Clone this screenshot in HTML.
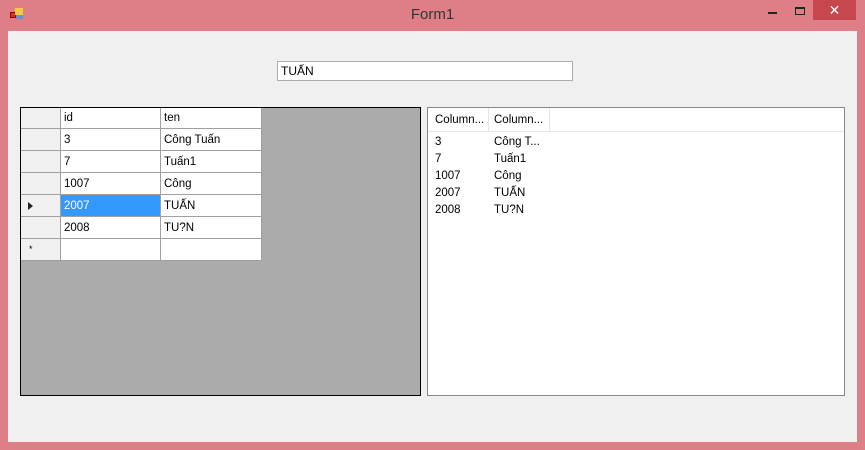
<!DOCTYPE html>
<html><head><meta charset="utf-8"><style>
*{margin:0;padding:0;box-sizing:border-box}
body{width:865px;height:450px;background:#de7f88;font-family:"Liberation Sans","DejaVu Sans",sans-serif;font-size:12px;position:relative;overflow:hidden;color:#000}
.abs{position:absolute}
.client{left:8px;top:31px;width:849px;height:411px;background:#f0f0f0}
.title{left:0;top:6px;width:865px;text-align:center;font-size:15px;color:#333}
.grid{left:20px;top:107px;width:401px;height:289px;border:1px solid #000;background:#ababab}
.c{position:absolute;background:#fff;border-right:1px solid #a0a0a0;border-bottom:1px solid #a0a0a0;padding:5px 0 0 3px;font-size:11.5px;height:22px}
.rh{background:#f0f0f0}
.lv{left:427px;top:107px;width:418px;height:289px;border:1px solid #828790;background:#fff}
.lt{position:absolute;font-size:11.5px}
</style></head><body>
<div class="abs" style="left:10px;top:8px;width:14px;height:12px">
<div class="abs" style="left:0;top:4px;width:6px;height:6px;background:#c33;border:1px solid #900"></div>
<div class="abs" style="left:5px;top:0;width:8px;height:7px;background:#f5c842"></div>
<div class="abs" style="left:6px;top:7px;width:7px;height:4px;background:#6c8fd8"></div>
</div>
<div class="abs title">Form1</div>
<div class="abs" style="left:768px;top:12px;width:9px;height:2px;background:#222"></div>
<div class="abs" style="left:795px;top:7px;width:10px;height:8px;border:1px solid #222;border-top-width:2px"></div>
<div class="abs" style="left:813px;top:0;width:43px;height:20px;background:#c7474e;color:#fff;text-align:center;font-size:14px;line-height:20px">✕</div>
<div class="abs client"></div>
<div class="abs" style="left:277px;top:61px;width:296px;height:20px;background:#fff;border:1px solid #abadb3;padding:2px 3px;font-size:12px">TUẤN</div>
<div class="abs grid">
 <div class="c rh" style="left:0;top:0;width:40px;height:21px"></div>
 <div class="c" style="left:40px;top:0;width:100px;height:21px;padding-top:4px">id</div>
 <div class="c" style="left:140px;top:0;width:101px;height:21px;padding-top:4px">ten</div>
 <div class="c rh" style="left:0;top:21px;width:40px"></div><div class="c" style="left:40px;top:21px;width:100px">3</div><div class="c" style="left:140px;top:21px;width:101px">Công Tuấn</div>
 <div class="c rh" style="left:0;top:43px;width:40px"></div><div class="c" style="left:40px;top:43px;width:100px">7</div><div class="c" style="left:140px;top:43px;width:101px">Tuấn1</div>
 <div class="c rh" style="left:0;top:65px;width:40px"></div><div class="c" style="left:40px;top:65px;width:100px">1007</div><div class="c" style="left:140px;top:65px;width:101px">Công</div>
 <div class="c rh" style="left:0;top:87px;width:40px"><div class="abs" style="left:7px;top:7px;border-left:5px solid #222;border-top:4px solid transparent;border-bottom:4px solid transparent"></div></div><div class="c" style="left:40px;top:87px;width:100px;background:#3399ff;color:#fff">2007</div><div class="c" style="left:140px;top:87px;width:101px">TUẤN</div>
 <div class="c rh" style="left:0;top:109px;width:40px"></div><div class="c" style="left:40px;top:109px;width:100px">2008</div><div class="c" style="left:140px;top:109px;width:101px">TU?N</div>
 <div class="c rh" style="left:0;top:131px;width:40px;padding:5px 0 0 8px;font-size:9px">*</div><div class="c" style="left:40px;top:131px;width:100px"></div><div class="c" style="left:140px;top:131px;width:101px"></div>
</div>
<div class="abs lv">
 <div class="abs" style="left:0;top:0;width:416px;height:24px;border-bottom:1px solid #e5e5e5"></div>
 <div class="abs" style="left:60px;top:0;width:1px;height:24px;background:#e5e5e5"></div>
 <div class="abs" style="left:121px;top:0;width:1px;height:24px;background:#e5e5e5"></div>
 <div class="lt" style="left:7px;top:6px">Column...</div><div class="lt" style="left:66px;top:6px">Column...</div>
 <div class="lt" style="left:7px;top:28px">3</div><div class="lt" style="left:66px;top:28px">Công T...</div>
 <div class="lt" style="left:7px;top:45px">7</div><div class="lt" style="left:66px;top:45px">Tuấn1</div>
 <div class="lt" style="left:7px;top:62px">1007</div><div class="lt" style="left:66px;top:62px">Công</div>
 <div class="lt" style="left:7px;top:79px">2007</div><div class="lt" style="left:66px;top:79px">TUẤN</div>
 <div class="lt" style="left:7px;top:96px">2008</div><div class="lt" style="left:66px;top:96px">TU?N</div>
</div>
</body></html>
